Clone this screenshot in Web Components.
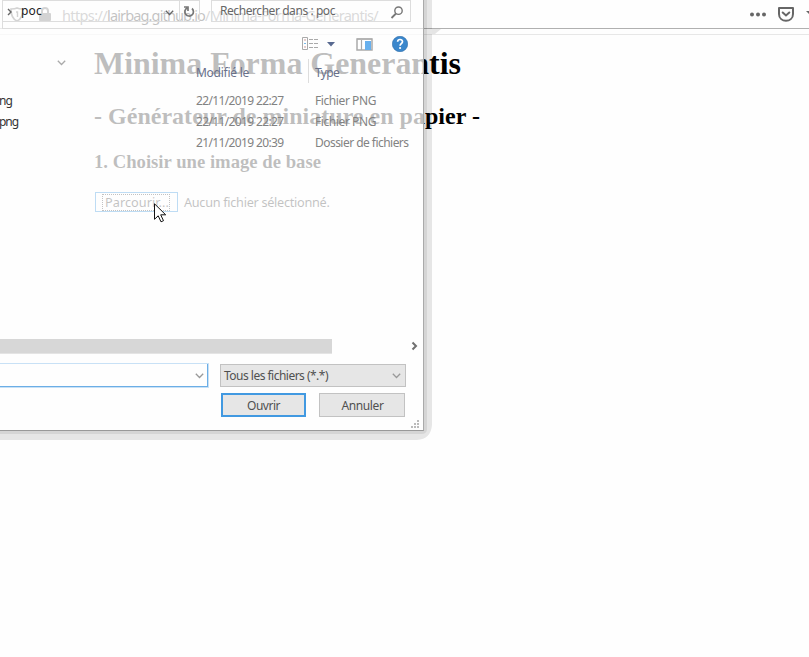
<!DOCTYPE html>
<html lang="fr"><head><meta charset="utf-8"><title>Minima Forma Generantis</title>
<style>html,body{margin:0;background:#fefefe;width:809px;height:657px;overflow:hidden}</style></head><body>
<demo-screen></demo-screen>
<script>
const make=(name,html,after)=>customElements.define(name,class extends HTMLElement{
 connectedCallback(){if(this.shadowRoot)return;this.attachShadow({mode:'open'}).innerHTML=html;if(after)after(this)}
});
/* A single line whose tracking is adjusted to occupy the given width. */
make('ui-label','<style>:host{display:block;white-space:pre}span{display:inline-block}</style><span><slot></slot></span>',el=>{
 const w=+el.getAttribute('width'),s=el.shadowRoot.querySelector('span'),n=el.textContent.length;
 if(w)s.style.letterSpacing=((w-s.getBoundingClientRect().width)/n)+'px';
});
make('ui-chevron',`<style>:host{display:block;width:9px;height:6px;color:#999}svg{display:block}</style><svg width="9" height="6"><path d="M.8.8 4.5 4.5 8.2.8" fill="none" stroke="currentColor" stroke-width="1.3"/></svg>`);
make('browser-bar',`<style>
:host{display:flex;height:28px;border-bottom:1px solid #b0b0b0;font:14.5px/20px "Noto Sans",sans-serif;color:#6f6f6f;box-sizing:content-box}
.security{display:flex;flex:none;gap:15px;padding:7px 0 0 10px;width:62px;box-sizing:border-box}
.url{display:flex;flex:none;padding-top:5px;width:686px}.domain{color:#111}
.actions{display:flex;flex:none;align-items:center;gap:12px;padding-left:2px}
svg{display:block;flex:none}
</style><div class="security"><svg width="14" height="15"><path d="M7 1c2 1 4 1 6 1 0 6-1 10-6 12C2 12 1 8 1 2c2 0 4 0 6-1Z" fill="none" stroke="#555" stroke-width="1.7"/><path d="M6 5h1.5v5" fill="none" stroke="#555" stroke-width="1.4"/></svg><svg width="12" height="15"><path d="M3 7V4a3 3 0 0 1 6 0v3" fill="none" stroke="#555" stroke-width="2"/><rect y="6" width="12" height="8" rx="1" fill="#555"/></svg></div>
<div class="url"><ui-label width="45">https://</ui-label><ui-label width="98" class="domain">lairbag.github.io</ui-label><ui-label width="173">/Minima-Forma-Generantis/</ui-label></div>
<div class="actions"><svg width="16" height="5"><g fill="#666"><circle cx="2" cy="2.5" r="2"/><circle cx="8" cy="2.5" r="2"/><circle cx="14" cy="2.5" r="2"/></g></svg><svg width="16" height="15"><path d="M1 1h14v6c0 9-14 9-14 0Z" fill="none" stroke="#666" stroke-width="2" stroke-linejoin="round"/><path d="m4.7 5.5 3.3 3 3.3-3" fill="none" stroke="#666" stroke-width="2" stroke-linecap="round"/></svg><svg width="9" height="15"><path d="M0 4h6v4L3 7Z" fill="#666"/></svg></div>`);
make('page-content',`<style>
:host{display:block;margin-top:5px;border-top:1px solid #e7e7e7;padding:10px 0 0 94px;font-family:"Liberation Serif",serif;color:#000}
h1,h2,h3{margin:0;font-weight:bold}h1{font-size:32px;line-height:37px}h2{font-size:24px;line-height:27px;margin-top:21px}h3{font-size:18.72px;line-height:21px;margin-top:21px}
.picker{display:flex;align-items:center;gap:6px;margin:20px 0 0 1px;height:20px;font:12.7px/18px "Noto Sans",sans-serif;color:#111}
button{font:inherit;color:inherit;background:transparent;border:1px solid #0078d7;width:83px;height:20px;box-sizing:border-box;padding:0 7px;display:flex;align-items:center}
button span{outline:1px dotted #111;display:block;height:15px;line-height:15px;width:66px;box-sizing:border-box;padding-left:2px}
</style><h1><ui-label width="367">Minima Forma Generantis</ui-label></h1><h2><ui-label width="386">- Générateur de miniature en papier -</ui-label></h2><h3><ui-label width="227">1. Choisir une image de base</ui-label></h3><div class="picker"><button><span><ui-label width="64">Parcourir...</ui-label></span></button><ui-label width="145.5">Aucun fichier sélectionné.</ui-label></div>`);
make('dialog-location',`<style>
:host{display:grid;grid-template-columns:177px 20px 11px 200px;margin-left:2px;border-left:1px solid #ddd;border-bottom:1px solid #ddd;box-sizing:border-box;height:29px;font:12px/18px "Noto Sans",sans-serif;color:#444}
.box{display:flex;height:22px;box-sizing:border-box;border:1px solid #ddd;border-left:0}.box.search{border-left:1px solid #ddd;padding:1px 6px 0 8px;justify-content:space-between;color:#666}
.path{padding:1px 5px 0 4px;gap:6px}.path ui-chevron{margin:8px 0 0 auto;color:#666}svg{display:block}
</style><div class="box path"><svg width="6" height="10" style="margin-top:5px"><path d="m1 2 3 3-3 3" fill="none" stroke="#666" stroke-width="1.4"/></svg><ui-label width="21" style="margin-left:2px;color:#222">poc</ui-label><ui-chevron></ui-chevron></div><div class="box"><svg width="13" height="15" style="margin:4px 0 0 3px"><path d="M4 3a4.3 4.3 0 1 0 5 .5M1 2h4v4" fill="none" stroke="#777" stroke-width="1.7"/></svg></div><span></span><div class="box search"><ui-label width="115">Rechercher dans : poc</ui-label><svg width="14" height="14" style="margin-top:4px"><circle cx="8.5" cy="4.7" r="3.7" fill="none" stroke="#777" stroke-width="1.4"/><path d="M6 7.5 1.5 12" stroke="#777" stroke-width="1.8"/></svg></div>`);
make('dialog-tools',`<style>:host{display:flex;height:30px;align-items:center;padding-left:302px;box-sizing:border-box}svg{display:block;flex:none}</style>
<svg width="17" height="14"><path d="M.5.5h5v12h-5z" fill="none" stroke="#aaa"/><path d="M2 3h2M2 10h2" stroke="#c99"/><path d="M2 6.5h2" stroke="#79b9e8"/><path d="M7 2.5h4m1 0h4M7 6.5h4m1 0h4M7 10.5h4m1 0h4" stroke="#aaa"/></svg><svg width="8" height="5" style="margin-left:8px"><path d="M0 0h8L4 4.5Z" fill="#586990"/></svg><svg width="17" height="13" style="margin-left:21px"><path d="M1 1h15v11H1z" fill="#fff" stroke="#aaa" stroke-width="1.5"/><path d="M1 1h15M5.5 2v10" stroke="#aaa" stroke-width="1.2"/><path d="M9 3h6v9H9z" fill="#68b0ed"/></svg><svg width="16" height="16" style="margin-left:19px"><circle cx="8" cy="8" r="7.7" fill="#3b87cc" stroke="#2d6ca8" stroke-width=".6"/><path d="M5.6 5.8c.2-3.2 5-2.9 4.9 0 0 1.7-2.4 1.8-2.4 4" fill="none" stroke="#fff" stroke-width="1.7"/><circle cx="8.1" cy="12" r="1.1" fill="#fff"/></svg>`);
make('file-list',`<style>
:host{display:block;height:280px;font:12px/20px "Noto Sans",sans-serif;color:#828282}
.row{display:grid;grid-template-columns:196px 119px 108px;height:20.8px}.head{height:24px;margin-bottom:8px;color:#68708a;line-height:27px}.name{color:#333;margin-left:-1px}
.type{border-left:1px solid #ddd;margin-left:-7px;padding-left:6px;height:24px}.head ui-chevron{margin:1px 0 0 57px;color:#aaa}
</style><div class="row head"><ui-chevron></ui-chevron><ui-label width="53">Modifié le</ui-label><div class="type"><ui-label width="24">Type</ui-label></div></div>
<div class="row"><ui-label class="name" width="13">ng</ui-label><ui-label width="87.5">22/11/2019 22:27</ui-label><ui-label width="61">Fichier PNG</ui-label></div>
<div class="row"><ui-label class="name" width="19">png</ui-label><ui-label width="87.5">22/11/2019 22:27</ui-label><ui-label width="61">Fichier PNG</ui-label></div>
<div class="row"><span></span><ui-label width="87.5">21/11/2019 20:39</ui-label><ui-label width="93.5">Dossier de fichiers</ui-label></div>`);
make('dialog-footer',`<style>
:host{display:block;font:12px/20px "Noto Sans",sans-serif;color:#505050}
.scroll{display:flex;justify-content:space-between;height:15px;padding-right:4px}.thumb{width:332px;height:14px;background:#d7d7d7;border-bottom:1px solid #e4e4e4}
.fields{display:flex;align-items:flex-start;gap:11px;margin-top:9px}.field{box-sizing:border-box;height:25px;margin-left:-2px;width:211px;border:2px solid #6caee6;border-width:1.5px 2px 2px 0;outline:1px solid #c8e1f6;outline-offset:-1px;display:flex;justify-content:flex-end;padding:9px 3px}
.select{box-sizing:border-box;width:186px;height:23px;margin-top:1px;border:1px solid #c2c2c2;background:#e6e6e6;display:flex;justify-content:space-between;padding:1px 4px 0 3px}.select ui-chevron{margin-top:7px}
.buttons{display:flex;gap:13px;margin:5px 0 0 221px}button{font:inherit;color:inherit;box-sizing:border-box;width:86px;height:24px;border:1px solid #c2c2c2;background:#e6e6e6;padding:1px 0 0 1px;display:flex;align-items:center;justify-content:center}.primary{border:2px solid #4199e1;width:85px;padding-left:0}
.grip{display:block;margin:3px 0 0 411px}
</style><div class="scroll"><div class="thumb"></div><svg width="8" height="10" style="margin-top:2px"><path d="m1.5 1.5 3.5 3.5-3.5 3.5" fill="none" stroke="#707070" stroke-width="2"/></svg></div>
<div class="fields"><div class="field"><ui-chevron></ui-chevron></div><div class="select"><ui-label width="104">Tous les fichiers (*.*)</ui-label><ui-chevron></ui-chevron></div></div><div class="buttons"><button class="primary"><ui-label width="33">Ouvrir</ui-label></button><button><ui-label width="42">Annuler</ui-label></button></div>
<svg class="grip" width="9" height="8"><path d="M6 0h2v2H6zM3 3h2v2H3zm3 0h2v2H6zM0 6h2v2H0zm3 0h2v2H3zm3 0h2v2H6z" fill="#bbb"/></svg>`);
make('file-dialog',`<style>
:host{display:block;position:absolute;z-index:2;left:0;top:0;width:424px;height:431px;box-sizing:border-box;border-right:1px solid #aaa;border-bottom:1px solid #999;background:rgba(253,253,253,.75)}
</style><dialog-location></dialog-location><dialog-tools></dialog-tools><file-list></file-list><dialog-footer></dialog-footer>`);
make('dialog-shadow',`<style>:host{position:absolute;z-index:1;left:0;top:0;width:424px;height:431px;overflow:visible;pointer-events:none}
svg{display:block;overflow:visible}</style><svg width="440" height="448"><path d="M424 0h8v425q-1 14-15 15H0v-9h424Z" fill="#000" fill-opacity=".095"/><path d="M424 0h3v430q-1 4-5 4H0v-3h424Z" fill="#000" fill-opacity=".07"/><path d="M432 29h9l-6 5h-3Z" fill="#e5e5e5"/></svg>`);
make('mouse-pointer',`<style>:host{display:block;position:absolute;z-index:3;left:154px;top:203px;width:13px;height:20px}svg{display:block}</style><svg width="13" height="20"><path d="M.5.8v15.5l3.7-3.5 2.8 6 2.5-1.1-2.8-5.9h5Z" fill="#fff" stroke="#111" stroke-width="1"/></svg>`);
make('demo-screen',`<style>:host{display:block;position:relative;width:809px;height:657px;overflow:hidden;background:#fefefe}</style><browser-bar></browser-bar><page-content></page-content><dialog-shadow></dialog-shadow><file-dialog></file-dialog><mouse-pointer></mouse-pointer>`);
</script></body></html>
